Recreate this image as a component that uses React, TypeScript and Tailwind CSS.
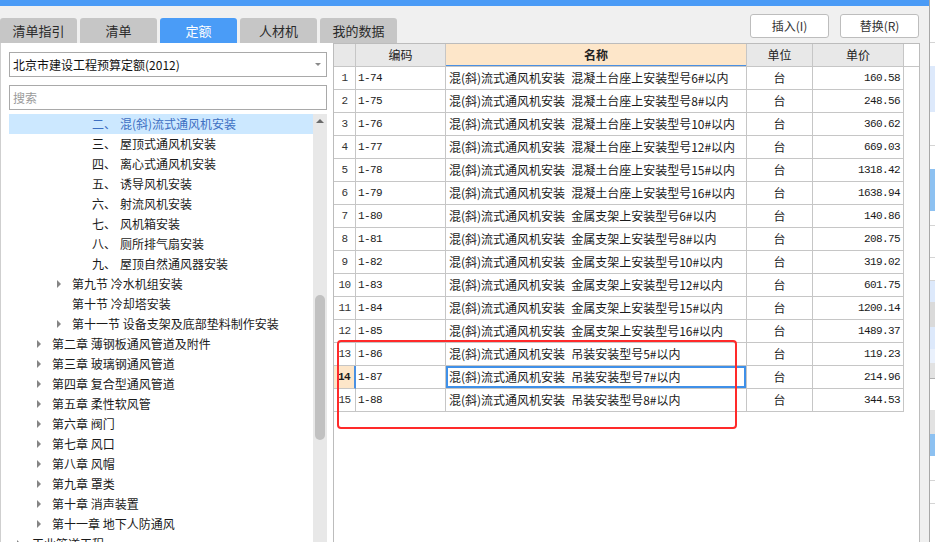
import React from "react";

type TreeItem = { level: 1 | 2 | 3 | 4; num?: string; label: string; arrow?: boolean; selected?: boolean };

const tree: TreeItem[] = [
  { level: 4, num: "二、", label: "混(斜)流式通风机安装", selected: true },
  { level: 4, num: "三、", label: "屋顶式通风机安装" },
  { level: 4, num: "四、", label: "离心式通风机安装" },
  { level: 4, num: "五、", label: "诱导风机安装" },
  { level: 4, num: "六、", label: "射流风机安装" },
  { level: 4, num: "七、", label: "风机箱安装" },
  { level: 4, num: "八、", label: "厕所排气扇安装" },
  { level: 4, num: "九、", label: "屋顶自然通风器安装" },
  { level: 3, label: "第九节 冷水机组安装", arrow: true },
  { level: 3, label: "第十节 冷却塔安装", arrow: false },
  { level: 3, label: "第十一节 设备支架及底部垫料制作安装", arrow: true },
  { level: 2, label: "第二章 薄钢板通风管道及附件", arrow: true },
  { level: 2, label: "第三章 玻璃钢通风管道", arrow: true },
  { level: 2, label: "第四章 复合型通风管道", arrow: true },
  { level: 2, label: "第五章 柔性软风管", arrow: true },
  { level: 2, label: "第六章 阀门", arrow: true },
  { level: 2, label: "第七章 风口", arrow: true },
  { level: 2, label: "第八章 风帽", arrow: true },
  { level: 2, label: "第九章 罩类", arrow: true },
  { level: 2, label: "第十章 消声装置", arrow: true },
  { level: 2, label: "第十一章 地下人防通风", arrow: true },
  { level: 1, label: "工业管道工程", arrow: true },
];

const P1 = "混(斜)流式通风机安装";
const rows: [string, string, string][] = [
  ["1-74", "混凝土台座上安装型号6#以内", "160.58"],
  ["1-75", "混凝土台座上安装型号8#以内", "248.56"],
  ["1-76", "混凝土台座上安装型号10#以内", "360.62"],
  ["1-77", "混凝土台座上安装型号12#以内", "669.03"],
  ["1-78", "混凝土台座上安装型号15#以内", "1318.42"],
  ["1-79", "混凝土台座上安装型号16#以内", "1638.94"],
  ["1-80", "金属支架上安装型号6#以内", "140.86"],
  ["1-81", "金属支架上安装型号8#以内", "208.75"],
  ["1-82", "金属支架上安装型号10#以内", "319.02"],
  ["1-83", "金属支架上安装型号12#以内", "601.75"],
  ["1-84", "金属支架上安装型号15#以内", "1200.14"],
  ["1-85", "金属支架上安装型号16#以内", "1489.37"],
  ["1-86", "吊装安装型号5#以内", "119.23"],
  ["1-87", "吊装安装型号7#以内", "214.96"],
  ["1-88", "吊装安装型号8#以内", "344.53"],
];

const levelPad: Record<number, string> = {
  1: "pl-[8px]",
  2: "pl-[28px]",
  3: "pl-[48px]",
  4: "pl-[83px]",
};

const tabs = ["清单指引", "清单", "定额", "人材机", "我的数据"];

const mono = "font-['Liberation_Mono',monospace] text-[11px] tracking-[-0.6px]";

function Arrow({ show }: { show: boolean }) {
  return (
    <span className="w-[15px] shrink-0 flex items-center">
      {show && <span className="w-0 h-0 border-y-[4px] border-y-transparent border-l-[4px] border-l-[#858585]" />}
    </span>
  );
}

const strip: [string, string][] = [
  ["h-[42px]", "bg-white"],
  ["h-[1px]", "bg-[#d4d4d4]"],
  ["h-[23px]", "bg-white"],
  ["h-[46px]", "bg-[#dde9fb]"],
  ["h-[33px]", "bg-white"],
  ["h-[1px]", "bg-[#d4d4d4]"],
  ["h-[23px]", "bg-white"],
  ["h-[42px]", "bg-[#8dc1f1]"],
  ["h-[14px]", "bg-white"],
  ["h-[1px]", "bg-[#d4d4d4]"],
  ["h-[31px]", "bg-white"],
  ["h-[1px]", "bg-[#d4d4d4]"],
  ["h-[22px]", "bg-white"],
  ["h-[1px]", "bg-[#d4d4d4]"],
  ["h-[21px]", "bg-[#dde9fb]"],
  ["h-[25px]", "bg-[#dadada]"],
  ["h-[22px]", "bg-[#dde9fb]"],
  ["h-[14px]", "bg-[#eaf1fc]"],
  ["h-[15px]", "bg-[#e2e2e2]"],
  ["h-[1px]", "bg-[#b0b0b0]"],
  ["h-[31px]", "bg-white"],
  ["h-[24px]", "bg-[#e2e2e2]"],
  ["h-[22px]", "bg-[#8dc1f1]"],
  ["h-[24px]", "bg-white"],
  ["h-[1px]", "bg-[#d4d4d4]"],
  ["h-[22px]", "bg-white"],
  ["h-[1px]", "bg-[#d4d4d4]"],
  ["h-[40px]", "bg-white"],
];

export default function App() {
  return (
    <div className="relative w-[935px] h-[542px] overflow-hidden flex bg-[#f0f0f0] text-[12px] text-[#1a1a1a] font-['Noto_Sans_CJK_SC','Noto_Sans',sans-serif]">
      {/* main column */}
      <div className="w-[930px] h-full flex flex-col border-r border-[#a8a8a8]">
        <div className="h-[6px] bg-[#4b9bf6] shrink-0" />
        {/* top row: tabs + buttons */}
        <div className="h-[37px] shrink-0 flex pr-[10px]">
          <div className="w-[400px] shrink-0 flex items-end gap-[3px]">
            {tabs.map((t) => (
              <div
                key={t}
                className={
                  t === "定额"
                    ? "w-[77px] shrink-0 h-[25px] rounded-t-[3px] bg-[#4a9cf7] text-white text-[13px] flex items-center justify-center"
                    : "w-[77px] shrink-0 h-[25px] rounded-t-[3px] bg-[#c6c6c6] text-[#2a2a2a] text-[13px] flex items-center justify-center"
                }
              >
                {t}
              </div>
            ))}
          </div>
          <div className="flex-1 flex justify-end items-start pt-[8px] gap-[11px]">
            <div className="w-[79px] h-[24px] rounded-[3px] border border-[#bdbdbd] bg-white flex items-center justify-center text-[#333]">
              插入(I)
            </div>
            <div className="w-[79px] h-[24px] rounded-[3px] border border-[#bdbdbd] bg-white flex items-center justify-center text-[#333]">
              替换(R)
            </div>
          </div>
        </div>
        {/* body */}
        <div className="flex-1 flex min-h-0 pr-[9px]">
          {/* left panel */}
          <div className="w-[333px] bg-white border-l border-[#cfcfcf] flex flex-col pl-[8px] pr-[6px] pt-[9px] min-h-0">
            <div className="h-[25px] border border-[#a9a9a9] flex items-center pl-[3px] pr-[5px] text-[#111]">
              <span className="flex-1">北京市建设工程预算定额(2012)</span>
              <span className="w-0 h-0 border-x-[3px] border-x-transparent border-t-[3px] border-t-[#8a8a8a]" />
            </div>
            <div className="h-[25px] mt-[8px] border border-[#a9a9a9] flex items-center pl-[3px] text-[#9a9a9a]">
              搜索
            </div>
            <div className="flex-1 mt-[4px] flex min-h-0 overflow-hidden">
              <div className="flex-1 flex flex-col">
                {tree.map((it, i) => (
                  <div
                    key={i}
                    className={`h-[20px] shrink-0 flex items-center whitespace-nowrap ${levelPad[it.level]} ${
                      it.selected ? "bg-[#cce8ff] text-[#3d6fc2]" : ""
                    }`}
                  >
                    {it.arrow !== undefined && <Arrow show={it.arrow} />}
                    {it.num && <span className="w-[28px] shrink-0">{it.num}</span>}
                    <span>{it.label}</span>
                  </div>
                ))}
              </div>
              {/* scrollbar */}
              <div className="w-[14px] bg-[#e8e8e8] flex flex-col items-center">
                <span className="mt-[5px] w-0 h-0 border-x-[4px] border-x-transparent border-b-[4px] border-b-[#6a6a6a]" />
                <div className="mt-[172px] w-[10px] h-[145px] rounded-full bg-[#c1c1c1]" />
              </div>
            </div>
          </div>
          {/* right panel */}
          <div className="flex-1 bg-white border border-b-0 border-[#bcbcbc] flex flex-col">
            {/* header */}
            <div className="flex h-[23px] shrink-0 border-b border-[#c6c6c6] text-[#222]">
              <div className="w-[22px] bg-[#e8e8e8] border-r border-[#c6c6c6]" />
              <div className="w-[90px] bg-[#e8e8e8] border-r border-[#c6c6c6] flex items-center justify-center">编码</div>
              <div className="w-[301px] bg-[#fde6c9] border-r border-[#c6c6c6] flex items-center justify-center font-bold shadow-[inset_0_-1px_0_#4a90e2]">
                名称
              </div>
              <div className="w-[66px] bg-[#e8e8e8] border-r border-[#c6c6c6] flex items-center justify-center">单位</div>
              <div className="w-[91px] bg-[#e8e8e8] border-r border-[#c6c6c6] flex items-center justify-center">单价</div>
            </div>
            {rows.map(([code, name, price], i) => {
              const sel = i === 13;
              return (
                <div key={code} className="flex h-[23px] shrink-0">
                  <div
                    className={
                      sel
                        ? `w-[22px] bg-[#fde6c9] border-r-2 border-r-[#4a90e2] border-b border-b-[#c6c6c6] flex items-center justify-center font-bold ${mono}`
                        : `w-[22px] border-r border-b border-[#c6c6c6] flex items-center justify-center text-[#333] ${mono}`
                    }
                  >
                    {i + 1}
                  </div>
                  <div className={`w-[90px] border-r border-b border-[#c6c6c6] flex items-center pl-[2px] ${mono}`}>{code}</div>
                  <div
                    className={
                      sel
                        ? "w-[301px] border-r border-b border-[#c6c6c6] flex items-center pl-[3px] whitespace-nowrap shadow-[inset_0_0_0_2px_#3f90e8]"
                        : "w-[301px] border-r border-b border-[#c6c6c6] flex items-center pl-[3px] whitespace-nowrap"
                    }
                  >
                    <span>{P1}</span>
                    <span className="ml-[6px]">{name}</span>
                  </div>
                  <div className="w-[66px] border-r border-b border-[#c6c6c6] flex items-center justify-center">台</div>
                  <div className={`w-[91px] border-r border-b border-[#c6c6c6] flex items-center justify-end pr-[3px] ${mono}`}>
                    {price}
                  </div>
                </div>
              );
            })}
          </div>
        </div>
      </div>
      {/* neighbour panel sliver */}
      <div className="flex-1 flex flex-col">
        {strip.map(([h, c], i) => (
          <div key={i} className={`${h} ${c} shrink-0`} />
        ))}
      </div>
      {/* red annotation */}
      <div className="absolute left-[337px] top-[340px] w-[400px] h-[89px] border-[2.5px] border-[#ff2a2a] rounded-[4px]" />
    </div>
  );
}
